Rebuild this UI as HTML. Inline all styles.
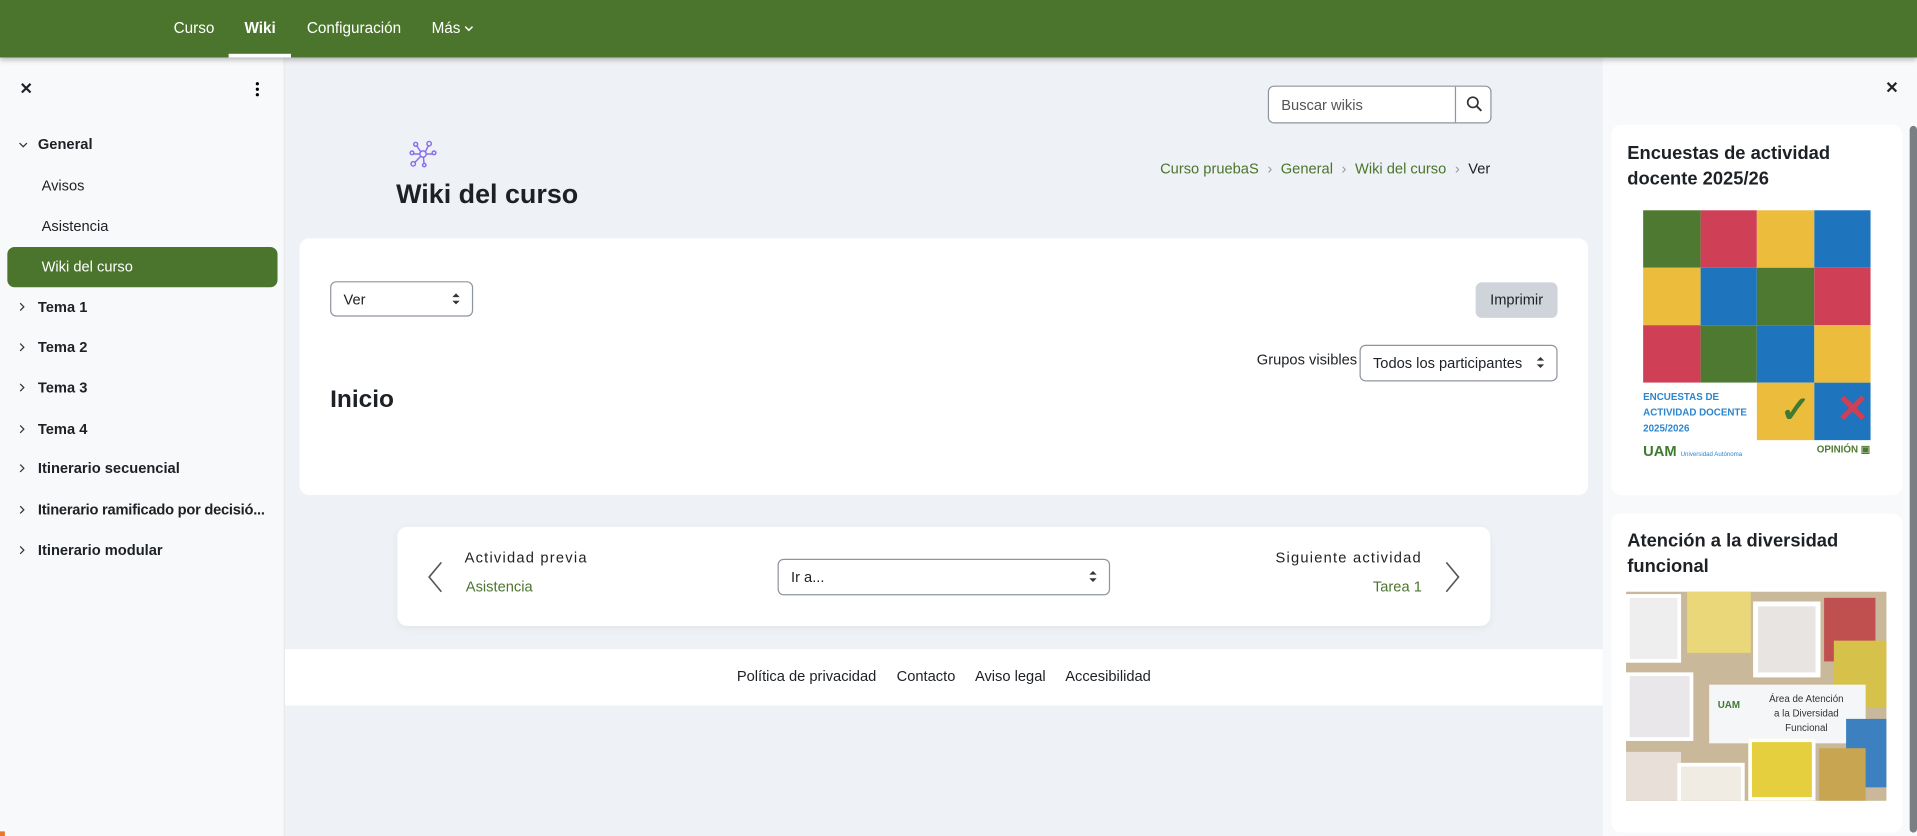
<!DOCTYPE html>
<html><head><meta charset="utf-8">
<style>
*{box-sizing:border-box;margin:0;padding:0}
html,body{width:1917px;height:836px;overflow:hidden;background:#eef1f5;font-family:"Liberation Sans",sans-serif;color:#1d2125}
#w{position:absolute;left:0;top:0;width:1568px;height:684px;transform:scale(1.22258);transform-origin:0 0;background:#eef1f5}
.a{position:absolute;white-space:nowrap}
.nav{left:0;top:0;width:1568px;height:47px;background:#4b752c;box-shadow:0 2px 4px rgba(0,0,0,.25);z-index:5}
.nav span{position:absolute;top:16px;color:#fff;font-size:12.5px}
.side{left:0;top:47px;width:233px;height:637px;background:#f8f9fa;border-right:1px solid #e6e8ea}
.side .i{position:absolute;font-size:12px;color:#1d2125;white-space:nowrap}
.side .b{font-weight:bold;left:31px}
.chev{position:absolute;left:15px}
.rside{left:1311px;top:47px;width:257px;height:637px;background:#f8f9fa}
.card{background:#fff;border-radius:8px}
.sel{position:absolute;border:1px solid #8f959e;border-radius:5px;background:#fff;font-size:12px;padding-left:10px;display:flex;align-items:center}
.sel:after{content:"";position:absolute;right:10px;top:50%;margin-top:-5px;border-left:3px solid transparent;border-right:3px solid transparent;border-bottom:3.5px solid #333;height:0}
.sel:before{content:"";position:absolute;right:10px;top:50%;margin-top:1px;border-left:3px solid transparent;border-right:3px solid transparent;border-top:3.5px solid #333;height:0}
.g{color:#4b752c}
.gr div{float:left;width:46.5px;height:47px}
</style></head><body><div id="w">
<div class="a nav">
<span style="left:142px">Curso</span>
<span style="left:200px;font-weight:bold">Wiki</span>
<div class="a" style="left:187px;top:44px;width:51px;height:3px;background:#fff"></div>
<span style="left:251px">Configuración</span>
<span style="left:353px">Más</span>
<svg class="a" style="left:380px;top:21px" width="7" height="5" viewBox="0 0 7 5"><path d="M.5 .8l3 3 3-3" fill="none" stroke="#fff" stroke-width="1.2"/></svg>
</div>

<div class="a side">
<div class="i" style="left:16px;top:18px;font-size:13px;font-weight:bold">✕</div>
<svg class="a" style="left:209px;top:20px" width="3" height="12" viewBox="0 0 3 12"><circle cx="1.5" cy="1.5" r="1.3"/><circle cx="1.5" cy="6" r="1.3"/><circle cx="1.5" cy="10.5" r="1.3"/></svg>
<svg class="chev" style="top:69px" width="8" height="6" viewBox="0 0 8 6"><path d="M1 1l3 3 3-3" fill="none" stroke="#333" stroke-width="1"/></svg>
<div class="i b" style="top:64px">General</div>
<div class="i" style="left:34px;top:98px">Avisos</div>
<div class="i" style="left:34px;top:131px">Asistencia</div>
<div class="a" style="left:6px;top:155px;width:221px;height:33px;background:#4b752c;border-radius:6px"></div>
<div class="i" style="left:34px;top:164px;color:#fff">Wiki del curso</div>
<svg class="chev" style="top:200px" width="6" height="8" viewBox="0 0 6 8"><path d="M1.5 1l3 3-3 3" fill="none" stroke="#333"/></svg><div class="i b" style="top:197px">Tema 1</div>
<svg class="chev" style="top:233px" width="6" height="8" viewBox="0 0 6 8"><path d="M1.5 1l3 3-3 3" fill="none" stroke="#333"/></svg><div class="i b" style="top:230px">Tema 2</div>
<svg class="chev" style="top:266px" width="6" height="8" viewBox="0 0 6 8"><path d="M1.5 1l3 3-3 3" fill="none" stroke="#333"/></svg><div class="i b" style="top:263px">Tema 3</div>
<svg class="chev" style="top:300px" width="6" height="8" viewBox="0 0 6 8"><path d="M1.5 1l3 3-3 3" fill="none" stroke="#333"/></svg><div class="i b" style="top:297px">Tema 4</div>
<svg class="chev" style="top:332px" width="6" height="8" viewBox="0 0 6 8"><path d="M1.5 1l3 3-3 3" fill="none" stroke="#333"/></svg><div class="i b" style="top:329px">Itinerario secuencial</div>
<svg class="chev" style="top:366px" width="6" height="8" viewBox="0 0 6 8"><path d="M1.5 1l3 3-3 3" fill="none" stroke="#333"/></svg><div class="i b" style="top:363px;letter-spacing:-0.2px">Itinerario ramificado por decisió...</div>
<svg class="chev" style="top:399px" width="6" height="8" viewBox="0 0 6 8"><path d="M1.5 1l3 3-3 3" fill="none" stroke="#333"/></svg><div class="i b" style="top:396px">Itinerario modular</div>
</div>
<div class="a" style="left:0;top:680px;width:4px;height:4px;background:#e8782c"></div>

<div class="a" style="left:1037px;top:70px;width:183px;height:31px;border:1px solid #8f959e;border-radius:5px;background:#fff">
<span class="a" style="left:10px;top:8px;font-size:12px;color:#555">Buscar wikis</span>
<div class="a" style="left:152px;top:0;width:1px;height:29px;background:#8f959e"></div>
<svg class="a" style="left:161px;top:7px" width="14" height="14" viewBox="0 0 16 16"><circle cx="6.5" cy="6.5" r="4.8" fill="none" stroke="#333" stroke-width="1.6"/><path d="M10 10l4.5 4.5" stroke="#333" stroke-width="1.8"/></svg>
</div>
<svg class="a" style="left:334px;top:114px" width="24" height="24" viewBox="0 0 24 24" fill="none" stroke="#8a6cf0" stroke-width="1.2"><circle cx="12" cy="12" r="2.6"/><circle cx="6" cy="4" r="1.6"/><circle cx="17" cy="3.5" r="1.8"/><circle cx="3" cy="11" r="1.5"/><circle cx="21" cy="11" r="1.5"/><circle cx="4" cy="20" r="1.8"/><circle cx="13" cy="21" r="1.4"/><path d="M10 10L7 5.4M14 10l2.5-5M9.5 12H4.5M14.6 12h4.9M10 14l-4.6 4.7M12.4 14.6l.4 5"/></svg>
<div class="a" style="left:324px;top:146px;font-size:22px;font-weight:bold">Wiki del curso</div>
<div class="a" style="right:349px;top:131px;font-size:12px;white-space:nowrap"><span class="g">Curso pruebaS</span><span style="color:#999;margin:0 7px">›</span><span class="g">General</span><span style="color:#999;margin:0 7px">›</span><span class="g">Wiki del curso</span><span style="color:#999;margin:0 7px">›</span>Ver</div>

<div class="a card" style="left:245px;top:195px;width:1054px;height:210px">
<div class="sel" style="left:25px;top:35px;width:117px;height:29px">Ver</div>
<div class="a" style="left:962px;top:36px;width:67px;height:29px;background:#ced4da;border-radius:5px;font-size:12px;text-align:center;line-height:29px">Imprimir</div>
<div class="a" style="left:783px;top:92px;font-size:12px">Grupos visibles</div>
<div class="sel" style="left:867px;top:87px;width:162px;height:30px">Todos los participantes</div>
<div class="a" style="left:25px;top:121px;font-size:20px;font-weight:bold">Inicio</div>
</div>

<div class="a card" style="left:325px;top:431px;width:894px;height:81px;box-shadow:0 2px 6px rgba(0,0,0,.05)">
<svg class="a" style="left:24px;top:27px" width="14" height="28" viewBox="0 0 14 28"><path d="M12 2L2 14l10 12" fill="none" stroke="#555" stroke-width="1.3"/></svg>
<div class="a" style="left:55px;top:18px;font-size:12px;letter-spacing:1px">Actividad previa</div>
<div class="a g" style="left:56px;top:42px;font-size:12px">Asistencia</div>
<div class="sel" style="left:311px;top:26px;width:272px;height:30px">Ir a...</div>
<div class="a" style="right:56px;top:18px;font-size:12px;letter-spacing:1px">Siguiente actividad</div>
<div class="a g" style="right:56px;top:42px;font-size:12px">Tarea 1</div>
<svg class="a" style="left:856px;top:27px" width="14" height="28" viewBox="0 0 14 28"><path d="M2 2l10 12L2 26" fill="none" stroke="#555" stroke-width="1.3"/></svg>
</div>

<div class="a" style="left:233px;top:531px;width:1078px;height:46px;background:#fff;font-size:12px;text-align:center;line-height:45px">
Política de privacidad&nbsp;&nbsp;&nbsp;&nbsp; Contacto&nbsp;&nbsp;&nbsp;&nbsp; Aviso legal&nbsp;&nbsp;&nbsp;&nbsp; Accesibilidad</div>

<div class="a rside"></div>
<div class="a" style="left:1542px;top:64px;font-size:13px;font-weight:bold">✕</div>
<div class="a" style="left:1562px;top:103px;width:6px;height:578px;background:#7a7f85;border-radius:3px"></div>
<div class="a card" style="left:1318px;top:102px;width:238px;height:303px">
<div class="a" style="left:13px;top:13px;font-size:15px;font-weight:bold;line-height:21px;width:220px;white-space:normal">Encuestas de actividad docente 2025/26</div>
<div class="a gr" style="left:26px;top:70px;width:186px;height:188px">
<div style="background:#4d7a30"></div><div style="background:#cf3f55"></div><div style="background:#ecbc3d"></div><div style="background:#1e74bd"></div>
<div style="background:#ecbc3d"></div><div style="background:#1e74bd"></div><div style="background:#4d7a30"></div><div style="background:#cf3f55"></div>
<div style="background:#cf3f55"></div><div style="background:#4d7a30"></div><div style="background:#1e74bd"></div><div style="background:#ecbc3d"></div>
<div style="background:#fff;width:93px"></div><div style="background:#ecbc3d"></div><div style="background:#1e74bd"></div>
</div>
<div class="a" style="left:26px;top:216px;font-size:8px;font-weight:bold;color:#2a86cf;line-height:13px">ENCUESTAS DE<br>ACTIVIDAD DOCENTE<br>2025/2026</div>
<div class="a" style="left:138px;top:216px;font-size:30px;color:#3f7a30;font-weight:bold">✓</div>
<div class="a" style="left:184px;top:213px;font-size:32px;color:#cf3f55;font-weight:bold">✕</div>
<div class="a" style="left:26px;top:260px;font-size:12px;font-weight:bold;color:#3f7a30">UAM <span style="font-size:5px;font-weight:normal;color:#2a86cf">Universidad Autónoma</span></div>
<div class="a" style="left:168px;top:261px;font-size:8px;font-weight:bold;color:#4d7a30">OPINIÓN ▣</div>
</div>
<div class="a card" style="left:1318px;top:420px;width:238px;height:261px">
<div class="a" style="left:13px;top:12px;font-size:15px;font-weight:bold;line-height:21px;width:220px;white-space:normal">Atención a la diversidad funcional</div>
<div class="a" style="left:12px;top:64px;width:213px;height:171px;background:#c9b99a;overflow:hidden">
<div class="a" style="left:0;top:2px;width:45px;height:56px;background:#eee;border:3px solid #fff"></div>
<div class="a" style="left:50px;top:0;width:52px;height:50px;background:#e9d77a"></div>
<div class="a" style="left:104px;top:8px;width:55px;height:62px;background:#e8e4e1;border:4px solid #fff"></div>
<div class="a" style="left:162px;top:5px;width:42px;height:52px;background:#c05050"></div>
<div class="a" style="left:170px;top:40px;width:43px;height:55px;background:#d6c24a"></div>
<div class="a" style="left:0;top:66px;width:55px;height:56px;background:#e9e7ea;border:3px solid #fff"></div>
<div class="a" style="left:68px;top:76px;width:128px;height:48px;background:#f4f6f7"></div>
<div class="a" style="left:100px;top:82px;font-size:8px;line-height:12px;text-align:center;width:95px;color:#333">Área de Atención<br>a la Diversidad<br>Funcional</div>
<div class="a" style="left:75px;top:88px;font-size:8px;color:#3f7a30;font-weight:bold">UAM</div>
<div class="a" style="left:180px;top:104px;width:33px;height:56px;background:#3d80c0"></div>
<div class="a" style="left:0;top:131px;width:45px;height:40px;background:#e8e0d8"></div>
<div class="a" style="left:42px;top:140px;width:55px;height:40px;background:#f0ebe3;border:3px solid #fff"></div>
<div class="a" style="left:100px;top:120px;width:55px;height:51px;background:#e6cf3e;border:3px solid #fff"></div>
<div class="a" style="left:158px;top:128px;width:38px;height:43px;background:#c8a550"></div>
</div>
</div>
</div></body></html>
